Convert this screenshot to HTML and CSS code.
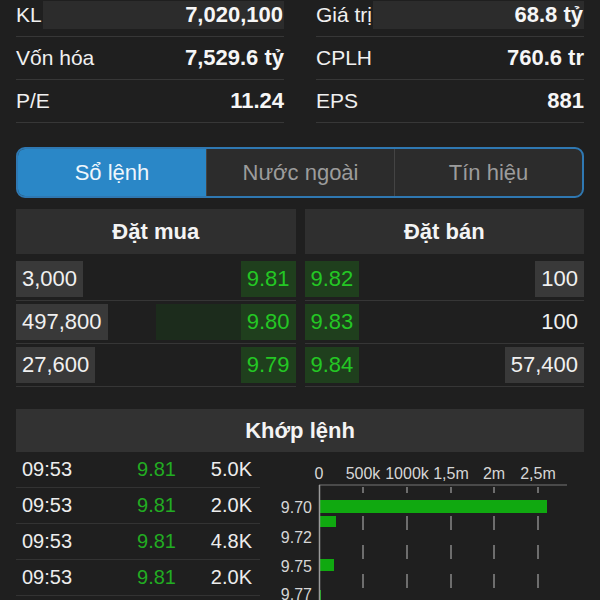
FILE: index.html
```html
<!DOCTYPE html>
<html lang="vi">
<head>
<meta charset="utf-8">
<title>Sổ lệnh</title>
<link rel="stylesheet" href="styles.css">
</head>
<body>
<div class="screen">
  <section class="stats">
    <div class="stat"><span class="lbl">KL</span><span class="val flash">7,020,100</span></div>
    <div class="stat"><span class="lbl">Giá trị</span><span class="val flash">68.8 tỷ</span></div>
    <div class="stat"><span class="lbl">Vốn hóa</span><span class="val">7,529.6 tỷ</span></div>
    <div class="stat"><span class="lbl">CPLH</span><span class="val">760.6 tr</span></div>
    <div class="stat"><span class="lbl">P/E</span><span class="val">11.24</span></div>
    <div class="stat"><span class="lbl">EPS</span><span class="val">881</span></div>
  </section>

  <nav class="tabs">
    <div class="tab active">Sổ lệnh</div>
    <div class="tab">Nước ngoài</div>
    <div class="tab">Tín hiệu</div>
  </nav>

  <section class="book">
    <div class="side buy">
      <div class="book-head">Đặt mua</div>
      <div class="orow"><span class="vol">3,000</span><span class="px">9.81</span></div>
      <div class="orow"><span class="vol">497,800</span><span class="depth" style="width:85px"></span><span class="px">9.80</span></div>
      <div class="orow"><span class="vol">27,600</span><span class="px">9.79</span></div>
    </div>
    <div class="side sell">
      <div class="book-head">Đặt bán</div>
      <div class="orow"><span class="px">9.82</span><span class="vol">100</span></div>
      <div class="orow"><span class="px">9.83</span><span class="vol plain">100</span></div>
      <div class="orow"><span class="px">9.84</span><span class="vol">57,400</span></div>
    </div>
  </section>

  <section class="match">
    <div class="match-head">Khớp lệnh</div>
    <div class="match-body">
      <div class="trades">
        <div class="trade"><span>09:53</span><span class="tp">9.81</span><span class="tv">5.0K</span></div>
        <div class="trade"><span>09:53</span><span class="tp">9.81</span><span class="tv">2.0K</span></div>
        <div class="trade"><span>09:53</span><span class="tp">9.81</span><span class="tv">4.8K</span></div>
        <div class="trade"><span>09:53</span><span class="tp">9.81</span><span class="tv">2.0K</span></div>
      </div>
      <svg class="chart" viewBox="0 0 324 148" width="324" height="148">
        <g class="xlab">
          <text x="59" y="27">0</text>
          <text x="103" y="27">500k</text>
          <text x="147" y="27">1000k</text>
          <text x="191" y="27">1,5m</text>
          <text x="234" y="27">2m</text>
          <text x="278" y="27">2,5m</text>
        </g>
        <line x1="59" y1="33" x2="307" y2="33" class="xaxis"/>
        <g class="grid">
          <line x1="103" y1="35" x2="103" y2="148"/>
          <line x1="147" y1="35" x2="147" y2="148"/>
          <line x1="191" y1="35" x2="191" y2="148"/>
          <line x1="234" y1="35" x2="234" y2="148"/>
          <line x1="278" y1="35" x2="278" y2="148"/>
        </g>
        <g class="bars">
          <rect x="59" y="48" width="228" height="13"/>
          <rect x="59" y="64" width="17" height="11"/>
          <rect x="59" y="107" width="15" height="12"/>
          <rect x="59" y="138" width="2" height="10"/>
        </g>
        <line x1="59.5" y1="33" x2="59.5" y2="148" class="yaxis"/>
        <g class="ylab">
          <text x="52" y="61">9.70</text>
          <text x="52" y="91">9.72</text>
          <text x="52" y="120">9.75</text>
          <text x="52" y="148">9.77</text>
        </g>
      </svg>
    </div>
  </section>
</div>
</body>
</html>
```
FILE: styles.css
```css
html, body {
  margin: 0;
  padding: 0;
}
body {
  background: #1f1f1f;
  color: #f2f2f2;
  font-family: "Liberation Sans", Arial, sans-serif;
  width: 600px;
  height: 600px;
  overflow: hidden;
}
.screen {
  width: 600px;
}

/* stats */
.stats {
  display: grid;
  grid-template-columns: 1fr 1fr;
  column-gap: 32px;
  padding: 0 16px;
  margin-top: -6px;
}
.stat {
  display: flex;
  align-items: center;
  height: 42px;
  border-bottom: 1px solid #373737;
}
.lbl {
  font-size: 21px;
  color: #f0f0f0;
  white-space: nowrap;
}
.val {
  flex: 1;
  text-align: right;
  font-size: 22px;
  font-weight: 700;
  color: #f6f6f6;
  white-space: nowrap;
}
.flash {
  background: #2c2c2c;
  height: 28px;
  line-height: 28px;
  margin-left: 1px;
  padding-right: 1px;
}

/* tabs */
.tabs {
  margin: 24px 16px 0;
  height: 51px;
  box-sizing: border-box;
  border: 2px solid #2f78b2;
  border-radius: 9px;
  overflow: hidden;
  display: grid;
  grid-template-columns: 1fr 1fr 1fr;
  background: #2c2c2c;
}
.tab {
  display: flex;
  align-items: center;
  justify-content: center;
  font-size: 22px;
  color: #9c9c9c;
  border-left: 1px solid #444;
}
.tab:first-child {
  border-left: none;
}
.tab.active {
  background: #2a87c7;
  color: #eef6fc;
}

/* order book */
.book {
  margin: 11px 16px 0;
  display: grid;
  grid-template-columns: 1fr 1fr;
  column-gap: 9px;
}
.book-head {
  height: 45px;
  background: #2f2f2f;
  display: flex;
  align-items: center;
  justify-content: center;
  font-size: 22px;
  font-weight: 700;
  color: #f4f4f4;
  margin-bottom: 4px;
}
.orow {
  display: flex;
  align-items: center;
  height: 42px;
  border-bottom: 1px solid #363636;
}
.vol,
.px {
  height: 36px;
  line-height: 36px;
  padding: 0 6px;
  font-size: 22px;
  white-space: nowrap;
}
.vol {
  background: #393939;
  color: #f0f0f0;
}
.vol.plain {
  background: transparent;
}
.px {
  background: #1f3f1d;
  color: #24c724;
}
.depth {
  height: 36px;
  background: #1c2c1c;
}
.buy .vol {
  margin-right: auto;
}
.sell .px {
  margin-right: auto;
}

/* matched orders */
.match {
  margin: 22px 16px 0;
}
.match-head {
  height: 43px;
  background: #323232;
  display: flex;
  align-items: center;
  justify-content: center;
  font-size: 22px;
  font-weight: 700;
  color: #f4f4f4;
}
.match-body {
  display: grid;
  grid-template-columns: 244px 1fr;
}
.trade {
  display: grid;
  grid-template-columns: 84px 70px 76px;
  align-items: center;
  height: 35px;
  padding-left: 6px;
  border-bottom: 1px solid #333;
  font-size: 20px;
  color: #ededed;
}
.tp {
  text-align: right;
  color: #22ac22;
}
.tv {
  text-align: right;
}

/* chart */
.chart {
  display: block;
}
.xlab text {
  font-family: "Liberation Sans", Arial, sans-serif;
  font-size: 16px;
  fill: #d6d6d6;
  text-anchor: middle;
}
.ylab text {
  font-family: "Liberation Sans", Arial, sans-serif;
  font-size: 16px;
  fill: #d6d6d6;
  text-anchor: end;
}
.xaxis {
  stroke: #5a5a5a;
  stroke-width: 1.5;
}
.yaxis {
  stroke: #9a9a9a;
  stroke-width: 1.5;
}
.grid line {
  stroke: #888;
  stroke-width: 1.5;
  stroke-dasharray: 6 23 14 15 14 15 14 15;
}
.bars rect {
  fill: #10a910;
}
```
